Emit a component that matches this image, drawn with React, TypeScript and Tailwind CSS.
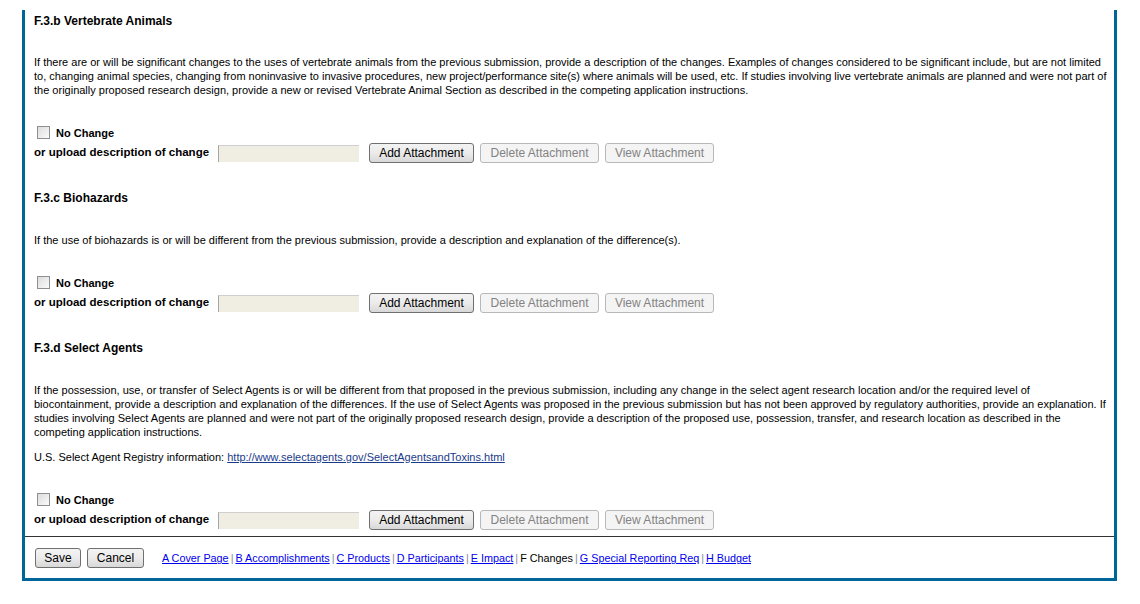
import React from "react";

const font = { fontFamily: '"Liberation Sans", Arial, sans-serif' };

function Checkbox() {
  return (
    <div className="w-[13px] h-[13px] border border-[#8e8f8f] bg-gradient-to-br from-[#dcdcdc] to-[#fbfbfb] shrink-0" />
  );
}

function Btn({ label, disabled, w }: { label: string; disabled?: boolean; w: string }) {
  return (
    <div
      className={
        "h-[20px] flex items-center justify-center rounded-[3px] border text-[12px] leading-none shrink-0 " +
        w +
        " " +
        (disabled
          ? "border-[#b5b9bc] bg-[#f4f4f4] text-[#838383]"
          : "border-[#707070] bg-gradient-to-b from-[#f3f3f3] via-[#ebebeb] to-[#d8d8d8] text-black")
      }
    >
      {label}
    </div>
  );
}

function UploadBlock() {
  return (
    <>
      <div className="h-[20px] flex items-center mt-[25px]">
        <div className="ml-[3px]">
          <Checkbox />
        </div>
        <span className="ml-[6px] font-bold text-[11px] mt-[2px]">No Change</span>
      </div>
      <div className="h-[20px] flex items-center mt-[1px]">
        <span className="w-[184px] font-bold text-[11.5px] shrink-0">or upload description of change</span>
        <div className="w-[141px] h-[17px] bg-[#f0ede2] border-l border-t border-l-[#a5a5a5] border-t-[#cfcfcf] mt-[1px] shrink-0" />
        <div className="ml-[10px] flex gap-[6px]">
          <Btn label="Add Attachment" w="w-[105px]" />
          <Btn label="Delete Attachment" w="w-[119px]" disabled />
          <Btn label="View Attachment" w="w-[109px]" disabled />
        </div>
      </div>
    </>
  );
}

function Para({ lines }: { lines: string[] }) {
  return (
    <div className="text-[11px] leading-[14px] text-black">
      {lines.map((l, i) => (
        <div key={i} className="whitespace-nowrap">
          {l}
        </div>
      ))}
    </div>
  );
}

function Heading({ children, first }: { children: React.ReactNode; first?: boolean }) {
  return (
    <div className={"text-[12px] font-bold leading-[14px] " + (first ? "mt-[1px]" : "mt-[28px]")}>{children}</div>
  );
}

export default function App() {
  const links: { t: string; link: boolean }[] = [
    { t: "A Cover Page", link: true },
    { t: "B Accomplishments", link: true },
    { t: "C Products", link: true },
    { t: "D Participants", link: true },
    { t: "E Impact", link: true },
    { t: "F Changes", link: false },
    { t: "G Special Reporting Req", link: true },
    { t: "H Budget", link: true },
  ];
  return (
    <div className="w-[1140px] h-[604px] bg-white text-black" style={font}>
      <div className="ml-[22px] mt-[10px] w-[1095px] border-l-[3px] border-r-[3px] border-b-[3px] border-[#006699]">
        <div className="px-[9px] pt-[3px]">
          <Heading first>F.3.b Vertebrate Animals</Heading>
          <div className="mt-[27px]">
            <Para
              lines={[
                "If there are or will be significant changes to the uses of vertebrate animals from the previous submission, provide a description of the changes. Examples of changes considered to be significant include, but are not limited",
                "to, changing animal species, changing from noninvasive to invasive procedures, new project/performance site(s) where animals will be used, etc. If studies involving live vertebrate animals are planned and were not part of",
                "the originally proposed research design, provide a new or revised Vertebrate Animal Section as described in the competing application instructions.",
              ]}
            />
          </div>
          <UploadBlock />

          <Heading>F.3.c Biohazards</Heading>
          <div className="mt-[28px]">
            <Para
              lines={[
                "If the use of biohazards is or will be different from the previous submission, provide a description and explanation of the difference(s).",
              ]}
            />
          </div>
          <UploadBlock />

          <Heading>F.3.d Select Agents</Heading>
          <div className="mt-[28px]">
            <Para
              lines={[
                "If the possession, use, or transfer of Select Agents is or will be different from that proposed in the previous submission, including any change in the select agent research location and/or the required level of",
                "biocontainment, provide a description and explanation of the differences. If the use of Select Agents was proposed in the previous submission but has not been approved by regulatory authorities, provide an explanation. If",
                "studies involving Select Agents are planned and were not part of the originally proposed research design, provide a description of the proposed use, possession, transfer, and research location as described in the",
                "competing application instructions.",
              ]}
            />
          </div>
          <div className="mt-[11px] text-[11px] leading-[14px] whitespace-nowrap">
            U.S. Select Agent Registry information:{" "}
            <span className="underline text-[#1a3a8a]">http://www.selectagents.gov/SelectAgentsandToxins.html</span>
          </div>
          <UploadBlock />
        </div>
        <div className="mt-[6px] h-px bg-[#333333]" />
        <div className="h-[41px] flex items-center pl-[10px]">
          <Btn label="Save" w="w-[46px]" />
          <div className="ml-[6px]">
            <Btn label="Cancel" w="w-[57px]" />
          </div>
          <div className="ml-[18px] mt-[2px] text-[10.8px] flex items-center whitespace-nowrap">
            {links.map((l, i) => (
              <React.Fragment key={i}>
                {i > 0 && <span className="text-[#7f8a99] mx-[2px]">|</span>}
                {l.link ? (
                  <span className="text-[#0000ee] underline">{l.t}</span>
                ) : (
                  <span className="text-black">{l.t}</span>
                )}
              </React.Fragment>
            ))}
          </div>
        </div>
      </div>
    </div>
  );
}
